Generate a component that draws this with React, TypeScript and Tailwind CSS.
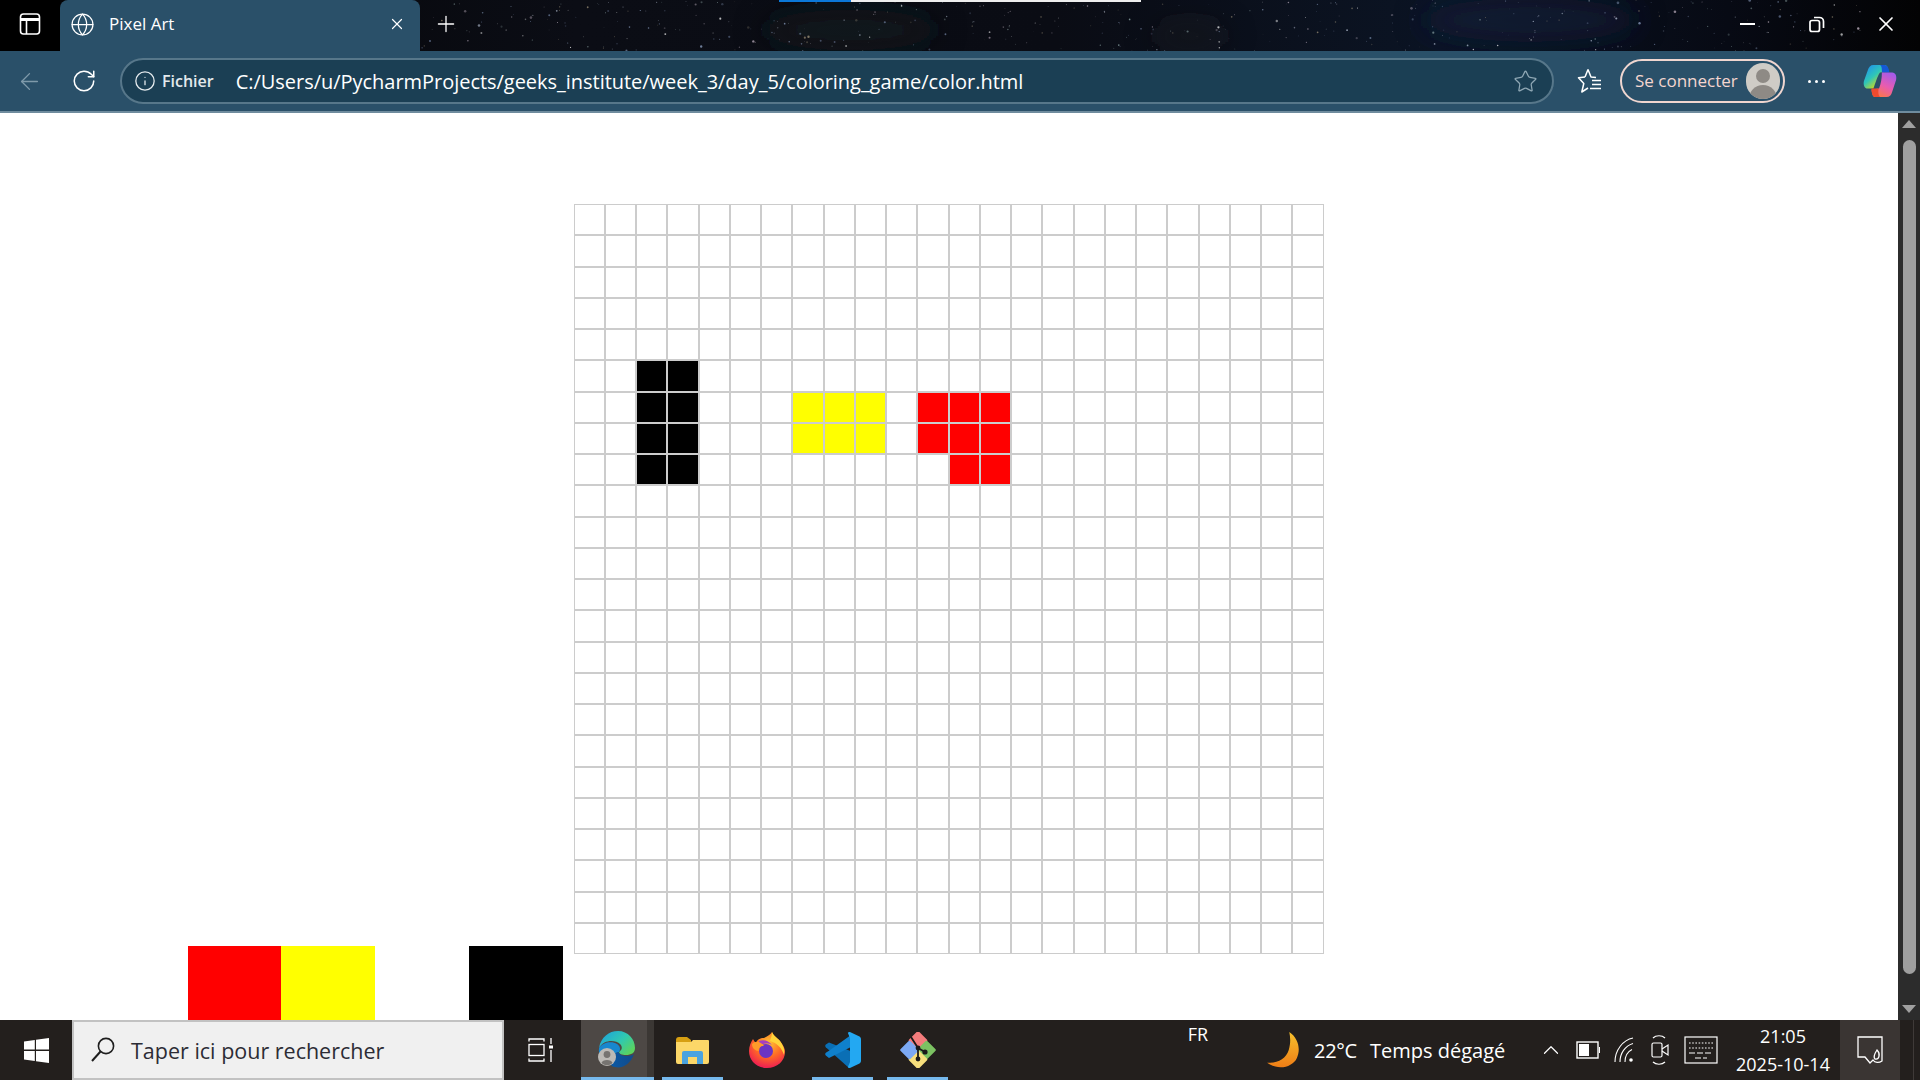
import { ArrowLeft, ChevronUp, Globe, Info, Plus, RotateCw, Star, X } from "lucide-react"

const FONT = "font-['Open_Sans','Noto_Sans',sans-serif]"

// pixels painted on the board, "row-col" -> colour class
const painted: Record<string, string> = {
  "5-2": "bg-black", "5-3": "bg-black", "6-2": "bg-black", "6-3": "bg-black",
  "7-2": "bg-black", "7-3": "bg-black", "8-2": "bg-black", "8-3": "bg-black",
  "6-7": "bg-[#ffff00]", "6-8": "bg-[#ffff00]", "6-9": "bg-[#ffff00]",
  "7-7": "bg-[#ffff00]", "7-8": "bg-[#ffff00]", "7-9": "bg-[#ffff00]",
  "6-11": "bg-[#ff0000]", "6-12": "bg-[#ff0000]", "6-13": "bg-[#ff0000]",
  "7-11": "bg-[#ff0000]", "7-12": "bg-[#ff0000]", "7-13": "bg-[#ff0000]",
  "8-12": "bg-[#ff0000]", "8-13": "bg-[#ff0000]",
}

function makeStars() {
  let seed = 1234
  const rnd = () => {
    seed = (seed * 16807) % 2147483647
    return seed / 2147483647
  }
  const colours = ["#c9d4e8", "#8fa3c4", "#d8c8d8", "#9fb8b8", "#a89a80", "#ffffff", "#6f7f9f"]
  return Array.from({ length: 520 }, () => ({
    x: 60 + rnd() * 1800,
    y: rnd() * 51,
    r: 0.35 + rnd() * rnd() * 1.1,
    c: colours[Math.floor(rnd() * colours.length)],
    o: 0.2 + rnd() * 0.55,
  }))
}

const stars = makeStars()

function Wallpaper() {
  return (
    <svg className="absolute inset-0 w-full h-full" viewBox="0 0 1920 51" preserveAspectRatio="none">
      <defs>
        <linearGradient id="sky" x1="0" x2="1" y1="0" y2="0">
          <stop offset="0" stopColor="#030304" />
          <stop offset="0.3" stopColor="#0b0d15" />
          <stop offset="0.55" stopColor="#0a0c14" />
          <stop offset="0.75" stopColor="#0b1424" />
          <stop offset="0.9" stopColor="#070a14" />
          <stop offset="1" stopColor="#030304" />
        </linearGradient>
        <filter id="soft">
          <feGaussianBlur stdDeviation="14" />
        </filter>
      </defs>
      <rect width="1920" height="51" fill="url(#sky)" />
      <g filter="url(#soft)">
        <ellipse cx="1530" cy="20" rx="110" ry="22" fill="#12253f" opacity="0.5" />
        <ellipse cx="850" cy="30" rx="90" ry="20" fill="#1c1d26" opacity="0.5" />
        <ellipse cx="1190" cy="36" rx="40" ry="14" fill="#2a2020" opacity="0.4" />
      </g>
      {stars.map((s, i) => (
        <circle key={i} cx={s.x} cy={s.y} r={s.r} fill={s.c} opacity={s.o} />
      ))}
    </svg>
  )
}

function WindowButton({ children }: { children: React.ReactNode }) {
  return <div className="w-[69px] h-full pb-[3px] flex items-center justify-center">{children}</div>
}

function TitleBar() {
  return (
    <div className="relative h-[51px] flex shrink-0 text-white">
      <Wallpaper />
      <div className="absolute top-0 left-[779px] h-[2px] w-[72px] bg-[#0b78d8]" />
      <div className="absolute top-0 left-[851px] h-[2px] w-[290px] bg-[#eeeeee]" />
      <div className="relative w-[60px] h-full pb-[3px] flex items-center justify-center bg-black">
        <svg width="22" height="24" viewBox="0 0 22 24" fill="none" stroke="white" strokeWidth="1.6">
          <rect x="1.5" y="2" width="19" height="20" rx="3" />
          <path d="M1.5 7.5h19" strokeWidth="3" />
          <path d="M7.5 8v14" />
        </svg>
      </div>
      <div className={`relative w-[360px] h-full pb-[3px] rounded-t-[8px] bg-[#2a5069] flex items-center ${FONT}`}>
        <Globe size={25} strokeWidth={1.2} className="ml-[10px] text-white" />
        <span className="ml-[14px] pb-[2px] text-[17px] leading-none">Pixel Art</span>
        <X size={18} strokeWidth={1.6} className="ml-auto mr-[14px]" />
      </div>
      <div className="relative ml-[11px] w-[30px] h-full pb-[3px] flex items-center justify-center">
        <Plus size={26} strokeWidth={1.2} />
      </div>
      <div className="relative ml-auto flex h-full pr-0">
        <WindowButton>
          <div className="w-[15px] h-[2px] bg-white" />
        </WindowButton>
        <WindowButton>
          <svg width="16" height="18" viewBox="0 0 16 18" fill="none" stroke="white" strokeWidth="1.7">
            <rect x="1" y="5.5" width="9.5" height="11" rx="2" />
            <path d="M5 2.5 h5.5 a4 4 0 0 1 4 4 v6.5" />
          </svg>
        </WindowButton>
        <WindowButton>
          <X size={24} strokeWidth={1.7} />
        </WindowButton>
      </div>
    </div>
  )
}

function FavoritesIcon() {
  return (
    <svg width="26" height="28" viewBox="0 0 26 28" fill="none" stroke="white" strokeWidth="1.5" strokeLinejoin="round">
      <path d="M11 2.5 L14 10 L19 10.5 M8 10 L1.5 10.8 L6.8 16.5 L4.8 25 L11 21" />
      <path d="M8 10 L11 2.5" />
      <path d="M15 13.5h9M15 17.5h9M13 21.5h11" />
    </svg>
  )
}

function CopilotIcon() {
  return (
    <svg width="34" height="36" viewBox="0 0 36 38">
      <defs>
        <linearGradient id="cpA" x1="0" x2="0.8" y1="0.1" y2="1">
          <stop offset="0" stopColor="#1f8ff0" />
          <stop offset="0.45" stopColor="#2fc6b8" />
          <stop offset="0.75" stopColor="#b8d832" />
          <stop offset="1" stopColor="#f5d020" />
        </linearGradient>
        <linearGradient id="cpB" x1="0.7" x2="0.2" y1="0" y2="1">
          <stop offset="0" stopColor="#a65be8" />
          <stop offset="0.5" stopColor="#e85cb0" />
          <stop offset="1" stopColor="#ff7a3c" />
        </linearGradient>
      </defs>
      <path d="M11 2 H23 C26 2 26.5 6 27 9 L18 10 C15 14 13 22 11 27 H5 C1.5 27 0 23 1 19 L5 8 C6 4 8 2 11 2Z" fill="url(#cpA)" />
      <path d="M18 2 H23 C26 2 27.5 6 28 10 L20 10 C20 6 20 3 18 2Z" fill="#1559d6" />
      <path d="M20 10 H31 C34.5 10 36 14 35 18 L31 30 C30 34 28 36 25 36 H13 C10 36 9.5 32 9 28 L17 27 C19 22 20 16 20 10Z" fill="url(#cpB)" />
      <path d="M9 27 H16.5 C16 31 16 34 18 36 H13 C10 36 9 31 9 27Z" fill="#ef4a2e" />
    </svg>
  )
}

function Toolbar() {
  return (
    <div className={`h-[62px] shrink-0 bg-[#2a5069] border-b-2 border-[#6f8c9e] flex items-center relative text-white ${FONT}`}>
      <div className="w-[59px] flex justify-center pr-[1px]">
        <ArrowLeft size={27} strokeWidth={1.2} className="text-[#7f9aaa]" />
      </div>
      <div className="w-[50px] flex justify-center">
        <RotateCw size={26} strokeWidth={1.4} className="text-white" />
      </div>
      <div className="ml-[11px] w-[1434px] h-[46px] rounded-full bg-[#1b3f54] border-2 border-[#57778a] flex items-center">
        <Info size={22} strokeWidth={1.4} className="ml-[12px] text-[#e6ecef]" />
        <span className="ml-[6px] text-[16px] font-semibold text-[#e3e9ec]">Fichier</span>
        <span className="ml-[22px] pt-[1px] text-[20px] tracking-[-0.03px] whitespace-nowrap">C:/Users/u/PycharmProjects/geeks_institute/week_3/day_5/coloring_game/color.html</span>
        <Star size={25} strokeWidth={1.2} className="ml-auto mr-[14px] text-[#8fa7b4]" />
      </div>
      <div className="w-[66px] pl-[5px] flex justify-center">
        <FavoritesIcon />
      </div>
      <div className="w-[165px] h-[44px] rounded-full border-2 border-[#f0d6d0] flex items-center">
        <span className="ml-[13px] text-[#f4d6d0] text-[17px] whitespace-nowrap">Se connecter</span>
        <div className="ml-auto mr-[3px] w-[34px] h-[36px] rounded-full bg-[#cfccc6] overflow-hidden flex flex-col items-center">
          <div className="mt-[6px] w-[14px] h-[16px] rounded-full bg-[#8e8a85]" />
          <div className="mt-[2px] w-[28px] h-[16px] rounded-t-full bg-[#8e8a85]" />
        </div>
      </div>
      <div className="w-[62px] flex justify-center gap-[4px]">
        <div className="w-[3px] h-[3px] rounded-full bg-white" />
        <div className="w-[3px] h-[3px] rounded-full bg-white" />
        <div className="w-[3px] h-[3px] rounded-full bg-white" />
      </div>
      <div className="ml-[16px]">
        <CopilotIcon />
      </div>
    </div>
  )
}

function Board() {
  const rows = Array.from({ length: 24 }, (_, i) => i)
  return (
    <div className="mt-[91px] ml-[573.6px] w-[750px] grid grid-cols-[repeat(24,31.25px)] grid-rows-[repeat(24,31.25px)]">
      {rows.map((r) =>
        rows.map((c) => (
          <div key={`${r}-${c}`} className={`border border-[#cccccc] ${painted[`${r}-${c}`] ?? "bg-white"}`} />
        ))
      )}
    </div>
  )
}

function Palette() {
  return (
    <div className="ml-[188px] -mt-[8px] flex">
      <div className="w-[93px] h-[94px] bg-[#ff0000]" />
      <div className="w-[94px] h-[94px] bg-[#ffff00]" />
      <div className="w-[94px] h-[94px] bg-white" />
      <div className="w-[94px] h-[94px] bg-black" />
    </div>
  )
}

function Scrollbar() {
  return (
    <div className="w-[22px] shrink-0 bg-[#2c2c2c] flex flex-col items-center">
      <div className="mt-[7px] w-0 h-0 border-x-[7.5px] border-x-transparent border-b-[8px] border-b-[#a0a0a0]" />
      <div className="mt-[12px] ml-[1px] w-[13px] h-[834px] rounded-full bg-[#9f9f9f]" />
      <div className="mt-[31px] w-0 h-0 border-x-[7.5px] border-x-transparent border-t-[8px] border-t-[#a0a0a0]" />
    </div>
  )
}

function EdgeIcon() {
  return (
    <svg width="46" height="38" viewBox="0 0 46 38">
      <defs>
        <linearGradient id="edA" x1="0" x2="1" y1="0" y2="0.7">
          <stop offset="0" stopColor="#1b9de2" />
          <stop offset="0.6" stopColor="#30c9b0" />
          <stop offset="1" stopColor="#5bd35f" />
        </linearGradient>
        <linearGradient id="edB" x1="0" x2="1" y1="0" y2="0">
          <stop offset="0" stopColor="#0c59a4" />
          <stop offset="1" stopColor="#114a8b" />
        </linearGradient>
      </defs>
      <path d="M1 17 C3 6 11 0 20 0 C30 0 37 8 37 17 C37 22 33 24 28 24 C24 24 21 23 21 21 C24 19 25 16 22 13 C18 9 6 8 1 17Z" fill="url(#edA)" />
      <path d="M1 17 C5 11 14 10 19 13 C22 15 23 18 21 21 C15 22 12 27 13 34 C5 32 0 25 1 17Z" fill="#1887cf" />
      <path d="M13 34 C11 27 16 22 21 21 C21 24 25 25 29 25 C32 25 35 24 36 23 C33 32 25 38 17 36 C15 36 14 35 13 34Z" fill="url(#edB)" />
      <circle cx="9" cy="26" r="9" fill="#bdbab6" />
      <circle cx="9" cy="23.5" r="3.4" fill="#777471" />
      <path d="M3.5 32 C4 28 14 28 14.5 32 C11 35 7 35 3.5 32Z" fill="#777471" />
    </svg>
  )
}

function FolderIcon() {
  return (
    <svg width="33" height="27" viewBox="0 0 33 27">
      <path d="M0 3 Q0 0 3 0 H11 L15 3 V8 H0Z" fill="#d79f12" />
      <path d="M0 5 H15 L17 3 H32 Q33 3 33 4 V25 Q33 27 31 27 H2 Q0 27 0 25Z" fill="#fcd768" />
      <path d="M6 27 V16 Q6 14 8 14 H25 Q27 14 27 16 V27 H21 V20 H12 V27Z" fill="#4aa3df" />
    </svg>
  )
}

function FirefoxIcon() {
  return (
    <svg width="36" height="36" viewBox="0 0 36 36" className="mr-[1px]">
      <defs>
        <radialGradient id="ffA" cx="0.55" cy="0.3" r="0.85">
          <stop offset="0" stopColor="#ffc433" />
          <stop offset="0.45" stopColor="#ff6b24" />
          <stop offset="0.8" stopColor="#f0244f" />
          <stop offset="1" stopColor="#c31a87" />
        </radialGradient>
      </defs>
      <path d="M18 36 C7 36 0 28 0 19 C0 14 2 10 4 7 C5 9 6 10 7 11 C9 6 13 6 15 6 C19 4 22 2 23 0 C25 5 30 6 33 12 C35 15 36 17 36 20 C36 29 28 36 18 36Z" fill="url(#ffA)" />
      <path d="M23 0 C25 5 30 6 33 12 C35 16 36 18 35 23 C33 16 28 11 21 9 C22 6 23 3 23 0Z" fill="#ffd43a" />
      <circle cx="17" cy="19" r="7" fill="#6b34c4" />
      <path d="M10 9 C15 7 20 9 23 13 C19 11 14 11 11 14Z" fill="#a63fc0" />
      <path d="M3 12 C7 8 12 10 15 14 C11 14 9 16 10 19 C6 19 3 16 3 12Z" fill="#ff9a2a" />
    </svg>
  )
}

function VsCodeIcon() {
  return (
    <svg width="36" height="36" viewBox="0 0 36 36">
      <path d="M0.8 12.6 C0 13.4 0 14.4 0.8 15.2 L24 36 L28 20 L4 10.6 Z" fill="#0a6fb5" />
      <path d="M0.8 23.4 C0 22.6 0 21.6 0.8 20.8 L4 18.8 L26 3 L28 14 L4 26Z" fill="#0f80cc" />
      <path d="M25.5 35.7 C24.5 36.2 23.5 36 22.8 35.2 L25 30 V6 L22.8 0.8 C23.5 0 24.5 -0.2 25.5 0.3 L34 4.3 C35.3 5 36 6 36 7.3 V28.7 C36 30 35.3 31 34 31.7Z" fill="#23a8f2" />
    </svg>
  )
}

function GitIcon() {
  return (
    <svg width="36" height="36" viewBox="0 0 36 36">
      <rect x="11" y="1.5" width="14" height="14" rx="1.5" transform="rotate(45 18 8.5)" fill="#f47c7c" />
      <rect x="19.5" y="11" width="14" height="14" rx="1.5" transform="rotate(45 26.5 18)" fill="#7cc262" />
      <rect x="11" y="20.5" width="14" height="14" rx="1.5" transform="rotate(45 18 27.5)" fill="#f7df7c" />
      <rect x="2.5" y="11" width="14" height="14" rx="1.5" transform="rotate(45 9.5 18)" fill="#7ca9f4" />
      <path d="M11 5 L18 16 V29 M18 16 L25 20" stroke="#1a1a1a" strokeWidth="1.8" fill="none" />
      <circle cx="18" cy="16" r="2.4" fill="#1a1a1a" />
      <circle cx="18" cy="27" r="2.4" fill="#1a1a1a" />
      <circle cx="25" cy="20" r="2.6" fill="#1a1a1a" />
    </svg>
  )
}

function PinnedApp({ children, active }: { children: React.ReactNode; active?: boolean }) {
  return (
    <div className="relative w-[61px] h-full flex items-center justify-center">
      {children}
      {active && <div className="absolute left-0 right-0 bottom-0 h-[3px] bg-[#76b9ed]" />}
    </div>
  )
}

function TaskBar() {
  return (
    <div className={`h-[60px] shrink-0 bg-[#231f1d] flex text-white ${FONT}`}>
      <div className="w-[72px] h-full flex items-center justify-center">
        <svg width="25" height="25" viewBox="0 0 25 25" fill="white">
          <path d="M0 3.6 L10.8 2 V11.6 H0Z M12 1.8 L25 0 V11.6 H12Z M0 13 H10.8 V23 L0 21.4Z M12 13 H25 V25 L12 23.2Z" />
        </svg>
      </div>
      <div className="w-[432px] h-full bg-[#f0f0f0] border-2 border-[#c2c2c2] flex items-center">
        <svg width="26" height="28" viewBox="0 0 26 28" fill="none" stroke="#1e1e1e" strokeWidth="1.6" className="ml-[16px]">
          <circle cx="16" cy="10" r="7.6" />
          <path d="M10.5 15.5 L2 25" strokeWidth="2" />
        </svg>
        <span className="ml-[15px] pt-[2px] text-[21.5px] text-[#2c2c35] whitespace-nowrap">Taper ici pour rechercher</span>
      </div>
      <div className="w-[77px] h-full flex items-center justify-center pr-[4px]">
        <svg width="26" height="24" viewBox="0 0 26 24" fill="none" stroke="white" strokeWidth="1.3">
          <path d="M1 3.5V1h15v2.5M1 20.5V23h15v-2.5" />
          <rect x="1" y="6.5" width="15" height="11" />
          <path d="M23 0v6M23 12v12" />
          <rect x="21" y="7.5" width="4" height="3" fill="white" stroke="none" />
        </svg>
      </div>
      <div className="relative w-[73px] h-full flex">
        <div className="w-[66px] h-full bg-[#4d4845] flex items-center justify-center pl-[14px]">
          <EdgeIcon />
        </div>
        <div className="w-[7px] h-full bg-[#3b3734]" />
        <div className="absolute left-0 right-0 bottom-0 h-[3px] bg-[#76b9ed]" />
      </div>
      <div className="ml-[8px] flex gap-[14px] h-full">
        <PinnedApp active>
          <FolderIcon />
        </PinnedApp>
        <PinnedApp>
          <FirefoxIcon />
        </PinnedApp>
        <PinnedApp active>
          <VsCodeIcon />
        </PinnedApp>
        <PinnedApp active>
          <GitIcon />
        </PinnedApp>
      </div>
      <div className="ml-[238px] w-[24px] pt-[5px] text-[18px] leading-[18px] text-center">FR</div>
      <div className="ml-[56px] w-[36px] h-full flex items-center">
        <svg width="36" height="38" viewBox="0 0 34 36">
          <defs>
            <linearGradient id="moon" x1="0.5" x2="0.5" y1="0" y2="1">
              <stop offset="0" stopColor="#f6c02c" />
              <stop offset="1" stopColor="#ee7d16" />
            </linearGradient>
          </defs>
          <path d="M22 1 C31 7 33 18 29 26 C25 34 12 38 1 30 C11 31 19 26 21.5 18 C23.5 11 23 6 22 1Z" fill="url(#moon)" />
        </svg>
      </div>
      <div className="ml-[12px] w-[44px] h-full pt-[2px] flex items-center text-[20px] tracking-[-0.3px] whitespace-nowrap">22°C</div>
      <div className="ml-[12px] w-[135px] h-full pt-[2px] flex items-center text-[20px] whitespace-nowrap">Temps dégagé</div>
      <div className="ml-[33px] w-[26px] h-full flex items-center justify-center">
        <ChevronUp size={26} strokeWidth={1.1} />
      </div>
      <div className="ml-[10px] w-[28px] h-full flex items-center justify-center">
        <svg width="24" height="18" viewBox="0 0 24 18" fill="none" stroke="white" strokeWidth="1.4">
          <rect x="1" y="1" width="21" height="16" />
          <rect x="3" y="3" width="10" height="12" fill="white" stroke="none" />
          <rect x="23" y="6" width="1" height="6" fill="white" stroke="none" />
        </svg>
      </div>
      <div className="ml-[10px] w-[26px] h-full flex items-center justify-center">
        <svg width="22" height="26" viewBox="0 0 22 26" fill="none" stroke="white" strokeWidth="1.1">
          <path d="M1 25 C1 13 9 3 19 1" />
          <path d="M6 25 C6 16 11 9 19 6.5" />
          <path d="M11 25 C11 20 13 15 18 12.5" />
          <circle cx="17" cy="23" r="1.8" fill="white" stroke="none" />
        </svg>
      </div>
      <div className="ml-[9px] w-[26px] h-full flex items-center justify-center">
        <svg width="18" height="32" viewBox="0 0 18 32" fill="none" stroke="white" strokeWidth="1.2">
          <path d="M2 4 C5 1 11 1 14 4 M2 28 C5 31 11 31 14 28" />
          <rect x="1" y="9" width="10" height="14" rx="1.5" />
          <path d="M11 15 L17 11 V21 L11 17" />
        </svg>
      </div>
      <div className="ml-[10px] w-[36px] h-full flex items-center justify-center">
        <svg width="34" height="28" viewBox="0 0 34 28" fill="none" stroke="white" strokeWidth="1.2">
          <rect x="1" y="1" width="32" height="26" />
          <path d="M5 7h24M5 12h24" strokeDasharray="1.6 1.6" />
          <path d="M5 17h24M11 22h12" strokeDasharray="6 2" />
        </svg>
      </div>
      <div className="ml-[9px] w-[110px] h-full flex flex-col items-center justify-center gap-[8px] text-[18px] leading-[20px]">
        <span>21:05</span>
        <span className="whitespace-nowrap">2025-10-14</span>
      </div>
      <div className="ml-[2px] w-[60px] h-full bg-[#3a3533] flex items-center justify-center">
        <svg width="26" height="28" viewBox="0 0 26 28" fill="none" stroke="white" strokeWidth="1.3">
          <path d="M1 1 H25 V25 C22 27 18 27 16 24 L13 27 L8 21 H1Z" />
          <path d="M20 14 C24 18 22 24 18 23 C16 21 18 17 20 14Z" />
        </svg>
      </div>
      <div className="flex-1 h-full flex justify-end">
        <div className="w-[7px] h-full border-l border-[#3f3a38]" />
      </div>
    </div>
  )
}

export default function App() {
  return (
    <div className="h-screen flex flex-col overflow-hidden bg-white">
      <TitleBar />
      <Toolbar />
      <div className="flex-1 flex min-h-0">
        <div className="flex-1 min-w-0 h-full overflow-hidden bg-white">
          <Board />
          <Palette />
        </div>
        <Scrollbar />
      </div>
      <TaskBar />
    </div>
  )
}
